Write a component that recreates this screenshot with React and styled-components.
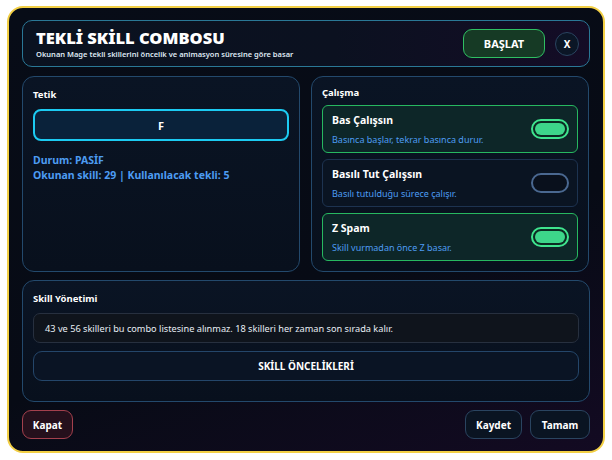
import React from "react";
import styled, { createGlobalStyle, css } from "styled-components";

const Global = createGlobalStyle`
  html, body { margin: 0; padding: 0; background: #ffffff; }
  body { font-family: "Noto Sans", "Open Sans", sans-serif; }
  * { box-sizing: border-box; }
`;

const Page = styled.div`
  padding: 6px 7px 7px 7px;
`;

const Frame = styled.div`
  height: 447px;
  border: 2px solid #f2cf45;
  border-radius: 16px;
  background: linear-gradient(160deg, #070c17 0%, #070b15 60%, #130a22 100%);
  padding: 12px 13px 12px 13px;
  display: flex;
  flex-direction: column;
  gap: 8px;
`;

const Header = styled.div`
  height: 47px;
  flex: none;
  border: 1px solid #2a7896;
  border-radius: 10px;
  background: linear-gradient(90deg, #0a1220 0%, #0b1120 55%, #140c26 100%);
  display: flex;
  align-items: center;
  padding: 0 10px 0 13px;
  margin-bottom: 1px;
`;

const TitleBlock = styled.div`
  flex: 1;
  display: flex;
  flex-direction: column;
  gap: 1px;
`;

const Title = styled.div`
  color: #ffffff;
  font-weight: 900;
  font-size: 16.5px;
  line-height: 20px;
`;

const Subtitle = styled.div`
  color: #dfe8f2;
  font-size: 7.5px;
  font-weight: 600;
  line-height: 11px;
`;

const Btn = styled.button`
  font-family: inherit;
  font-weight: 700;
  color: #ffffff;
  cursor: pointer;
  border-radius: 9px;
  font-size: 10px;
  height: 29px;
  padding: 0;
  ${(p) =>
    p.$variant === "green" &&
    css`
      background: #163a25;
      border: 1px solid #2fbf62;
      width: 82px;
      font-size: 11px;
    `}
  ${(p) =>
    p.$variant === "red" &&
    css`
      background: #25101c;
      border: 1px solid #a3404d;
      width: 51px;
    `}
  ${(p) =>
    p.$variant === "plain" &&
    css`
      background: #0a1422;
      border: 1px solid #2a4460;
      width: ${p.$w}px;
    `}
`;

const CloseBtn = styled.button`
  width: 24px;
  height: 24px;
  border-radius: 50%;
  background: #0b1626;
  border: 1px solid #2a4460;
  color: #ffffff;
  font-family: inherit;
  font-weight: 700;
  font-size: 10px;
  margin-left: 10px;
  padding: 0;
  display: flex;
  align-items: center;
  justify-content: center;
`;

const Row = styled.div`
  display: grid;
  grid-template-columns: 278px 278px;
  gap: 11px;
  height: 196px;
  flex: none;
`;

const Panel = styled.div`
  border: 1px solid #23496c;
  border-radius: 12px;
  background: linear-gradient(180deg, #0a1424 0%, #08101d 100%);
  padding: ${(p) => p.$pad || "10px 10px"};
  display: flex;
  flex-direction: column;
`;

const ManagePanel = styled(Panel)`
  height: 122px;
  flex: none;
`;

const Label = styled.div`
  color: #ffffff;
  font-weight: 700;
  font-size: 9.5px;
  line-height: 13px;
  margin-bottom: ${(p) => p.$mb || 8}px;
`;

const KeyBox = styled.div`
  height: 32px;
  border: 2px solid #1ccbf2;
  border-radius: 8px;
  background: #0a223a;
  color: #ffffff;
  font-weight: 700;
  font-size: 11px;
  display: flex;
  align-items: center;
  justify-content: center;
  margin-bottom: 12px;
`;

const Stat = styled.div`
  color: #4d9cf2;
  font-weight: 700;
  font-size: 10.5px;
  line-height: 15px;
`;

const Options = styled.div`
  display: flex;
  flex-direction: column;
  gap: 6px;
`;

const Option = styled.div`
  height: 48px;
  border-radius: 6px;
  border: 1px solid ${(p) => (p.$on ? "#27b860" : "#1d3350")};
  background: ${(p) => (p.$on ? "#0d2628" : "#0a1422")};
  display: flex;
  align-items: center;
  padding: 0 8px 0 9px;
`;

const OptText = styled.div`
  flex: 1;
  display: flex;
  flex-direction: column;
  gap: 7px;
  padding-top: 1px;
`;

const OptTitle = styled.div`
  color: #ffffff;
  font-weight: 700;
  font-size: 10.5px;
  line-height: 13px;
`;

const OptDesc = styled.div`
  color: #4d9cf2;
  font-size: 9px;
  line-height: 12px;
`;

const Toggle = styled.div`
  width: 38px;
  height: 20px;
  border-radius: 10px;
  border: 2px solid ${(p) => (p.$on ? "#3fe48e" : "#4a6890")};
  background: ${(p) => (p.$on ? "#0b2a22" : "#09101c")};
  padding: 2px;
  display: flex;
`;

const Knob = styled.div`
  flex: 1;
  border-radius: 6px;
  background: #3dd68a;
`;

const Info = styled.div`
  height: 30px;
  border: 1px solid #27303f;
  border-radius: 7px;
  background: #0f141c;
  color: #e8eef5;
  font-size: 9.2px;
  display: flex;
  align-items: center;
  padding: 0 11px;
  margin-bottom: 8px;
`;

const WideBtn = styled.div`
  height: 30px;
  border: 1px solid #24466a;
  border-radius: 9px;
  background: #0a1424;
  color: #ffffff;
  font-weight: 700;
  font-size: 10px;
  display: flex;
  align-items: center;
  justify-content: center;
`;

const Footer = styled.div`
  display: flex;
  align-items: center;
  gap: 8px;
`;

const Spacer = styled.div`
  flex: 1;
`;

const options = [
  { title: "Bas Çalışsın", desc: "Basınca başlar, tekrar basınca durur.", on: true },
  { title: "Basılı Tut Çalışsın", desc: "Basılı tutulduğu sürece çalışır.", on: false },
  { title: "Z Spam", desc: "Skill vurmadan önce Z basar.", on: true },
];

export default function App() {
  return (
    <>
      <Global />
      <Page>
        <Frame>
          <Header>
            <TitleBlock>
              <Title>TEKLİ SKİLL COMBOSU</Title>
              <Subtitle>Okunan Mage tekli skillerini öncelik ve animasyon süresine göre basar</Subtitle>
            </TitleBlock>
            <Btn $variant="green">BAŞLAT</Btn>
            <CloseBtn>X</CloseBtn>
          </Header>
          <Row>
            <Panel $pad="11px 10px">
              <Label $mb={8}>Tetik</Label>
              <KeyBox>F</KeyBox>
              <Stat>Durum: PASİF</Stat>
              <Stat>Okunan skill: 29 | Kullanılacak tekli: 5</Stat>
            </Panel>
            <Panel $pad="9px 10px">
              <Label $mb={6}>Çalışma</Label>
              <Options>
                {options.map((o) => (
                  <Option key={o.title} $on={o.on}>
                    <OptText>
                      <OptTitle>{o.title}</OptTitle>
                      <OptDesc>{o.desc}</OptDesc>
                    </OptText>
                    <Toggle $on={o.on}>{o.on && <Knob />}</Toggle>
                  </Option>
                ))}
              </Options>
            </Panel>
          </Row>
          <ManagePanel $pad="11px 10px">
            <Label $mb={8}>Skill Yönetimi</Label>
            <Info>43 ve 56 skilleri bu combo listesine alınmaz. 18 skilleri her zaman son sırada kalır.</Info>
            <WideBtn>SKİLL ÖNCELİKLERİ</WideBtn>
          </ManagePanel>
          <Footer>
            <Btn $variant="red">Kapat</Btn>
            <Spacer />
            <Btn $variant="plain" $w={57}>Kaydet</Btn>
            <Btn $variant="plain" $w={60}>Tamam</Btn>
          </Footer>
        </Frame>
      </Page>
    </>
  );
}
